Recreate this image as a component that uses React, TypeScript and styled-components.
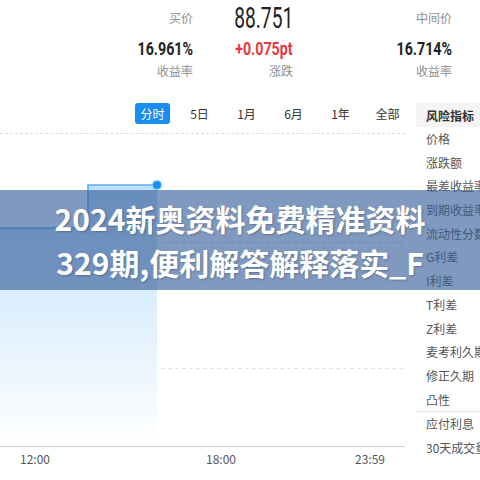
import React from 'react';
import styled, { createGlobalStyle } from 'styled-components';

const GlobalStyle = createGlobalStyle`
  html, body { margin: 0; padding: 0; background: #fff; }
  body { font-family: "Noto Sans CJK SC", "Noto Sans", sans-serif; }
`;

const Page = styled.div`
  position: relative;
  width: 480px;
  height: 480px;
  overflow: hidden;
  background: #fff;
  color: #333;
  font-family: "Noto Sans CJK SC", "Noto Sans", sans-serif;
`;

const QuoteGrid = styled.div`
  display: grid;
  grid-template-columns: 193px 100px 159px;
  grid-template-rows: 35px 28px 16px;
  align-content: start;
  align-items: center;
  justify-items: end;
  height: 103px;
`;

const Label = styled.span`
  font-size: 12px;
  line-height: 14px;
  color: #8e8e8e;
`;

const BigValue = styled.span`
  display: inline-block;
  font-family: Roboto, "Liberation Sans", sans-serif;
  font-size: 29px;
  line-height: 30px;
  color: #222;
  transform: scaleX(0.66);
  transform-origin: right center;
`;

const Value = styled.span<{ $color?: string }>`
  display: inline-block;
  font-family: Roboto, "Liberation Sans", sans-serif;
  font-weight: 700;
  font-size: 19px;
  line-height: 20px;
  color: ${(p) => p.$color ?? '#222'};
  transform: scaleX(0.75);
  transform-origin: right center;
`;

const Main = styled.div`
  display: flex;
  align-items: flex-start;
`;

const ChartColumn = styled.div`
  width: 405px;
  flex: none;
`;

const Tabs = styled.div`
  display: flex;
  gap: 12px;
  padding-left: 135px;
  height: 21px;
`;

const Tab = styled.div<{ $active?: boolean }>`
  width: 35px;
  height: 21px;
  display: flex;
  align-items: center;
  justify-content: center;
  font-size: 12px;
  border-radius: 3px;
  color: ${(p) => (p.$active ? '#fff' : '#333')};
  background: ${(p) => (p.$active ? '#1a8df0' : 'transparent')};
`;

const DashedRule = styled.div`
  margin-top: 9px;
  border-top: 1px dashed #dcdcdc;
`;

const ChartSvg = styled.svg`
  display: block;
  width: 405px;
  height: 313px;
`;

const Ticks = styled.div`
  display: flex;
  margin-top: 5px;
`;

const Tick = styled.span<{ $offset: number }>`
  width: 40px;
  margin-left: ${(p) => p.$offset}px;
  text-align: center;
  font-size: 12px;
  line-height: 14px;
  color: #555;
`;

const RiskPanel = styled.div`
  width: 64px;
  margin-left: 11px;
  overflow: hidden;
  flex: none;
`;

const PanelHeader = styled.div`
  height: 24px;
  display: flex;
  align-items: center;
  padding-left: 10px;
  background: #f4f4f4;
  font-size: 12px;
  font-weight: 700;
  color: #333;
  white-space: nowrap;
`;

const PanelItem = styled.div<{ $divider?: boolean }>`
  height: 23.7px;
  line-height: 23.7px;
  padding-left: 10px;
  font-size: 12px;
  color: #555;
  white-space: nowrap;
  border-top: ${(p) => (p.$divider ? '1px solid #dde4ec' : 'none')};
`;

const Banner = styled.div`
  position: absolute;
  left: 0;
  right: 0;
  top: 190px;
  height: 100px;
  padding-top: 6px;
  box-sizing: border-box;
  background: rgba(50, 90, 150, 0.62);
  text-align: center;
  color: #fff;
  font-family: "Noto Sans CJK SC", "Noto Sans", sans-serif;
  font-weight: 700;
  font-size: 30px;
  line-height: 44px;
  white-space: nowrap;
  text-shadow: 1px 1px 2px rgba(0, 0, 0, 0.25);
`;

const tabs = ['分时', '5日', '1月', '6月', '1年', '全部'];
const items = [
  '价格',
  '涨跌额',
  '最差收益率',
  '到期收益率',
  '流动性分数',
  'G利差',
  'I利差',
  'T利差',
  'Z利差',
  '麦考利久期',
  '修正久期',
  '凸性',
];

export default function App() {
  return (
    <Page>
      <GlobalStyle />
      <QuoteGrid>
        <Label>买价</Label>
        <BigValue>88.751</BigValue>
        <Label>中间价</Label>
        <Value>16.961%</Value>
        <Value $color="#e8383d">+0.075pt</Value>
        <Value>16.714%</Value>
        <Label>收益率</Label>
        <Label>涨跌</Label>
        <Label>收益率</Label>
      </QuoteGrid>
      <Main>
        <ChartColumn>
          <Tabs>
            {tabs.map((t, i) => (
              <Tab key={t} $active={i === 0}>
                {t}
              </Tab>
            ))}
          </Tabs>
          <DashedRule />
          <ChartSvg viewBox="0 0 405 313">
            <defs>
              <linearGradient id="fillGrad" x1="0" y1="0" x2="0" y2="1">
                <stop offset="0" stopColor="#bfe0fb" />
                <stop offset="1" stopColor="#ffffff" />
              </linearGradient>
            </defs>
            <line x1="0" y1="108.5" x2="405" y2="108.5" stroke="#d6d6d6" strokeDasharray="4 3" />
            <line x1="0" y1="234.5" x2="405" y2="234.5" stroke="#e2e2e2" strokeDasharray="4 3" />
            <polygon points="0,94 88,94 88,51 157,51 157,312 0,312" fill="url(#fillGrad)" />
            <polyline points="0,94 88,94 88,51 157,51" fill="none" stroke="#5aaaf0" strokeWidth="1.6" />
            <circle cx="157" cy="51" r="5.5" fill="#8cc8f8" opacity="0.6" />
            <circle cx="157" cy="51" r="4" fill="#1a8df0" />
            <line x1="0" y1="312.5" x2="405" y2="312.5" stroke="#cfcfcf" />
          </ChartSvg>
          <Ticks>
            <Tick $offset={15}>12:00</Tick>
            <Tick $offset={146}>18:00</Tick>
            <Tick $offset={109}>23:59</Tick>
          </Ticks>
        </ChartColumn>
        <RiskPanel>
          <PanelHeader>风险指标</PanelHeader>
          {items.map((t) => (
            <PanelItem key={t}>{t}</PanelItem>
          ))}
          <PanelItem $divider>应付利息</PanelItem>
          <PanelItem>30天成交量</PanelItem>
        </RiskPanel>
      </Main>
      <Banner>
        <div>2024新奥资料免费精准资料</div>
        <div>329期,便利解答解释落实_F</div>
      </Banner>
    </Page>
  );
}
